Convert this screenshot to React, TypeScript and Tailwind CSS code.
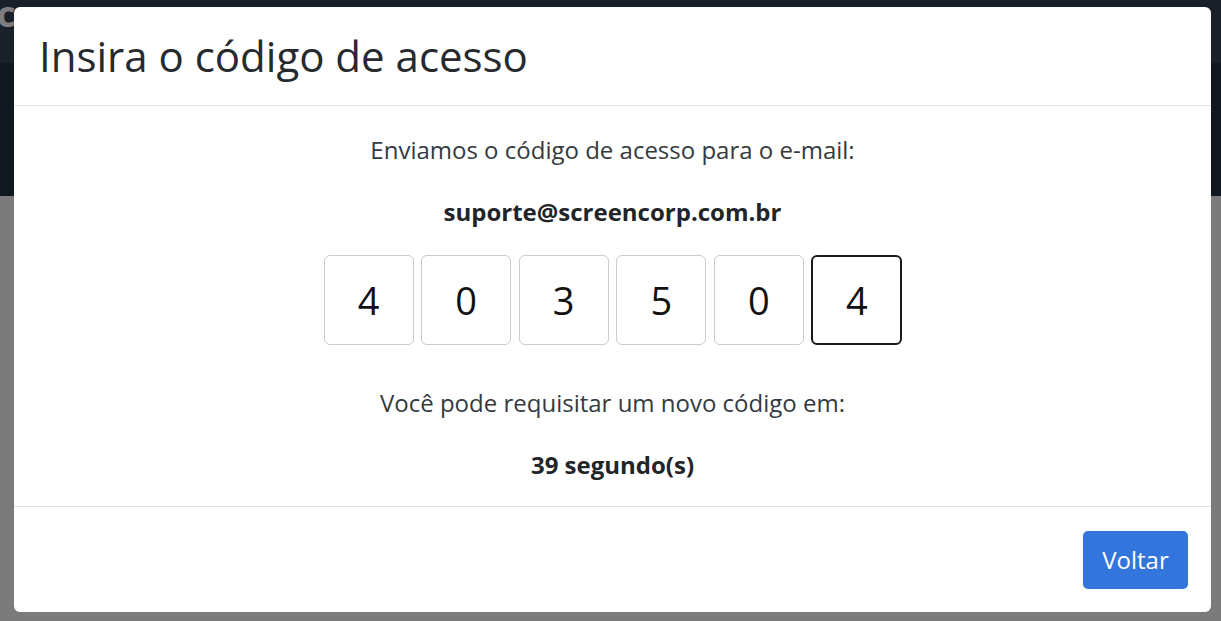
import React from "react";

const digits = ["4", "0", "3", "5", "0", "4"];

export default function App() {
  return (
    <div
      className="relative h-[621px] w-[1221px] overflow-hidden bg-[#7b7b7b]"
      style={{ fontFamily: '"Open Sans", "Noto Sans", sans-serif' }}
    >
      {/* background page (dimmed) */}
      <div className="flex h-[63px] items-start bg-[#1a202a]">
        <span className="-ml-[3px] mt-[-4px] text-[36px] font-bold leading-none tracking-[5px] text-[#7d7d7d]">com</span>
      </div>
      <div className="h-[133px] bg-[#111822]" />
      <div className="mx-[185px] mt-[360px] h-[40px] border-x border-[#6e6e6e] bg-[#7d7d7d]" />

      {/* modal */}
      <div className="absolute left-[14px] top-[7px] flex h-[605px] w-[1197px] flex-col rounded-[6px] bg-white text-[#212529]">
        <div className="flex h-[99px] shrink-0 items-center border-b border-[#dee2e6] px-[25px]">
          <h1 className="text-[42px] font-normal leading-none text-[#262a2e]">Insira o código de acesso</h1>
        </div>
        <div className="flex h-[401px] shrink-0 flex-col items-center border-b border-[#dee2e6] text-[24px] leading-[33px] text-[#343a40]">
          <p className="mt-[27px]">Enviamos o código de acesso para o e-mail:</p>
          <p className="mt-[29px] font-bold text-[#212529]">suporte@screencorp.com.br</p>
          <div className="mt-[27px] flex gap-[7.6px] pl-[1px]">
            {digits.map((d, i) => (
              <div
                key={i}
                className={
                  i === 5
                    ? "flex h-[90px] w-[91px] items-center justify-center rounded-[6px] border-2 border-[#1a1a1a] text-[38px] text-[#111]"
                    : "flex h-[90px] w-[90px] items-center justify-center rounded-[6px] border border-[#cccccc] text-[38px] text-[#111]"
                }
              >
                {d}
              </div>
            ))}
          </div>
          <p className="mt-[41px]">Você pode requisitar um novo código em:</p>
          <p className="mt-[29px] font-bold text-[#212529]">39 segundo(s)</p>
        </div>
        <div className="flex flex-1 items-center justify-end pr-[23px]">
          <button className="h-[58px] w-[105px] rounded-[5px] bg-[#3275dc] text-[24px] text-white">Voltar</button>
        </div>
      </div>
    </div>
  );
}
